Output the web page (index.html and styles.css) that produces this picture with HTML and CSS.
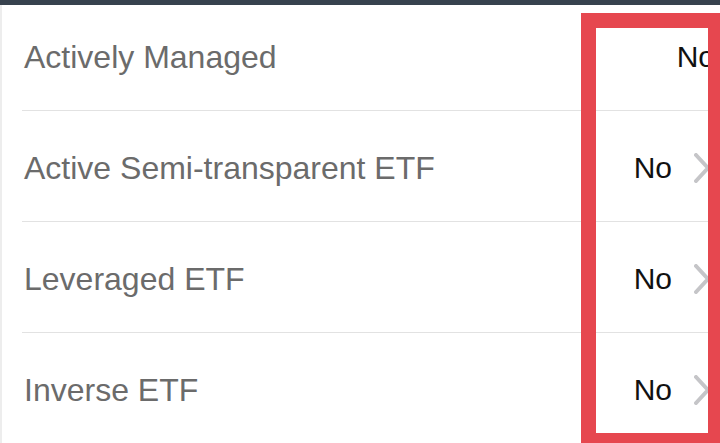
FILE: index.html
```html
<!DOCTYPE html>
<html lang="en">
  <head>
    <meta charset="UTF-8" />
    <meta name="viewport" content="width=device-width, initial-scale=1.0" />
    <title>ETF Details</title>
    <link rel="stylesheet" href="styles.css">
  </head>
  <body>
    <div class="top-bar"></div>
    <div class="detail-list">
      <div class="detail-row">
        <div class="detail-label">Actively Managed</div>
        <div class="detail-value plain">No</div>
      </div>
      <div class="detail-row">
        <div class="detail-label">Active Semi-transparent ETF</div>
        <div class="detail-value">
          No
          <svg class="chevron" width="16" height="30" viewBox="0 0 16 30">
            <polyline points="2,2 14,15 2,28" />
          </svg>
        </div>
      </div>
      <div class="detail-row">
        <div class="detail-label">Leveraged ETF</div>
        <div class="detail-value">
          No
          <svg class="chevron" width="16" height="30" viewBox="0 0 16 30">
            <polyline points="2,2 14,15 2,28" />
          </svg>
        </div>
      </div>
      <div class="detail-row">
        <div class="detail-label">Inverse ETF</div>
        <div class="detail-value">
          No
          <svg class="chevron" width="16" height="30" viewBox="0 0 16 30">
            <polyline points="2,2 14,15 2,28" />
          </svg>
        </div>
      </div>
    </div>
    <div class="highlight-box"></div>
  </body>
</html>
```

FILE: styles.css
```css
* {
  box-sizing: border-box;
}
body {
  margin: 0;
  font-family: "Liberation Sans", Arial, sans-serif;
  background: #ffffff;
  height: 443px;
  overflow: hidden;
  border-left: 2px solid #ededed;
}
.top-bar {
  position: fixed;
  top: 0;
  left: 0;
  width: 100%;
  height: 5px;
  background: #37424e;
  z-index: 10;
}
.detail-list {
  display: flex;
  flex-direction: column;
}
.detail-row {
  display: flex;
  align-items: center;
  justify-content: space-between;
  height: 111px;
  padding-top: 4px;
  margin-left: 20px;
  border-bottom: 1px solid #e2e2e2;
}
.detail-label {
  padding-left: 2px;
  font-size: 32px;
  color: #6b6b6b;
}
.detail-value {
  display: flex;
  align-items: center;
  gap: 22px;
  padding-right: 10px;
  font-size: 30px;
  color: #111111;
}
.detail-value.plain {
  padding-right: 5px;
}
.chevron {
  display: block;
}
.chevron polyline {
  fill: none;
  stroke: #c5c5c8;
  stroke-width: 4;
  stroke-linecap: round;
  stroke-linejoin: round;
}
.highlight-box {
  position: fixed;
  top: 13px;
  left: 581px;
  width: 142px;
  height: 435px;
  border: 15px solid #e6474f;
  z-index: 5;
}
```
